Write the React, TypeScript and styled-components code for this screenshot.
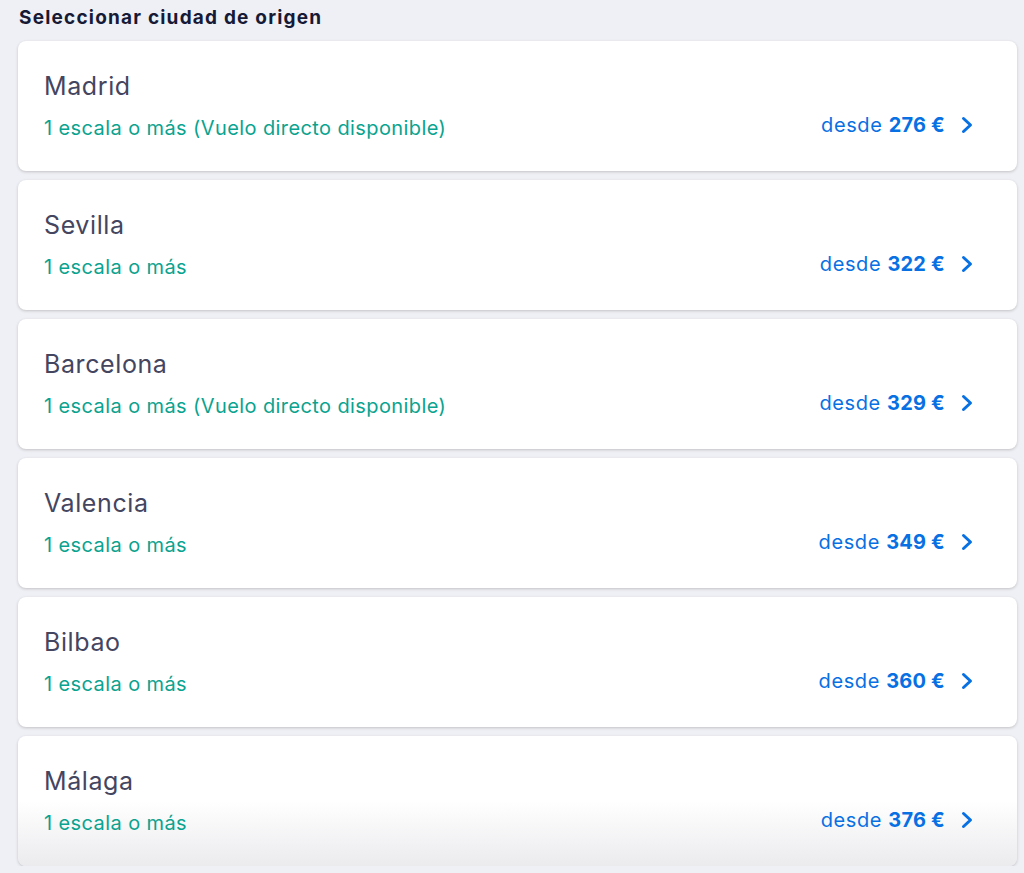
import React from "react";
import styled, { createGlobalStyle } from "styled-components";

const Global = createGlobalStyle`
  html, body { margin: 0; padding: 0; background: #eff0f5; }
  body { font-family: Inter, "Noto Sans", sans-serif; -webkit-font-smoothing: antialiased; }
`;

const Page = styled.div`
  padding: 6px 6px 0 18px;
  display: flex;
  flex-direction: column;
`;

const Title = styled.h2`
  margin: 0 0 11px 1px;
  font-size: 19px;
  line-height: 24px;
  font-weight: 700;
  color: #161a36;
  letter-spacing: 1.2px;
`;

const List = styled.div`
  display: flex;
  flex-direction: column;
  gap: 9px;
`;

const Card = styled.div<{ $fade?: boolean }>`
  height: 130px;
  box-sizing: border-box;
  background: ${(p) =>
    p.$fade ? "linear-gradient(to bottom, #ffffff 50%, #ebebee 100%)" : "#ffffff"};
  border-radius: 8px;
  box-shadow: 0 1px 3px rgba(37, 32, 31, 0.22);
  display: flex;
  align-items: stretch;
  padding: 30px 43px 29px 26px;
  margin-right: 1px;
`;

const Info = styled.div`
  flex: 1;
  display: flex;
  flex-direction: column;
  gap: 13px;
`;

const City = styled.div`
  font-size: 25px;
  line-height: 31px;
  color: #44455f;
  font-weight: 400;
  letter-spacing: 0.6px;
`;

const Stops = styled.div`
  font-size: 20px;
  line-height: 26px;
  color: #0aa38f;
  letter-spacing: 0.4px;
`;

const Price = styled.div`
  align-self: flex-end;
  margin-bottom: 4px;
  display: flex;
  align-items: center;
  gap: 15px;
  color: #0770e3;
  font-size: 20px;
  line-height: 26px;
  letter-spacing: 0.6px;
`;

const Amount = styled.span`
  font-weight: 700;
  letter-spacing: 0.2px;
`;

const Chevron = () => (
  <svg width="14" height="18" viewBox="0 0 14 18" aria-hidden>
    <polyline points="3.5,2.5 10.5,9 3.5,15.5" fill="none" stroke="#0770e3" strokeWidth="3" strokeLinecap="round" strokeLinejoin="round" />
  </svg>
);

const cities = [
  { name: "Madrid", stops: "1 escala o más (Vuelo directo disponible)", price: 276 },
  { name: "Sevilla", stops: "1 escala o más", price: 322 },
  { name: "Barcelona", stops: "1 escala o más (Vuelo directo disponible)", price: 329 },
  { name: "Valencia", stops: "1 escala o más", price: 349 },
  { name: "Bilbao", stops: "1 escala o más", price: 360 },
  { name: "Málaga", stops: "1 escala o más", price: 376 },
];

export default function App() {
  return (
    <>
      <Global />
      <Page>
        <Title>Seleccionar ciudad de origen</Title>
        <List>
          {cities.map((c, i) => (
            <Card key={c.name} $fade={i === cities.length - 1}>
              <Info>
                <City>{c.name}</City>
                <Stops>{c.stops}</Stops>
              </Info>
              <Price>
                <span>
                  desde <Amount>{c.price} €</Amount>
                </span>
                <Chevron />
              </Price>
            </Card>
          ))}
        </List>
      </Page>
    </>
  );
}
